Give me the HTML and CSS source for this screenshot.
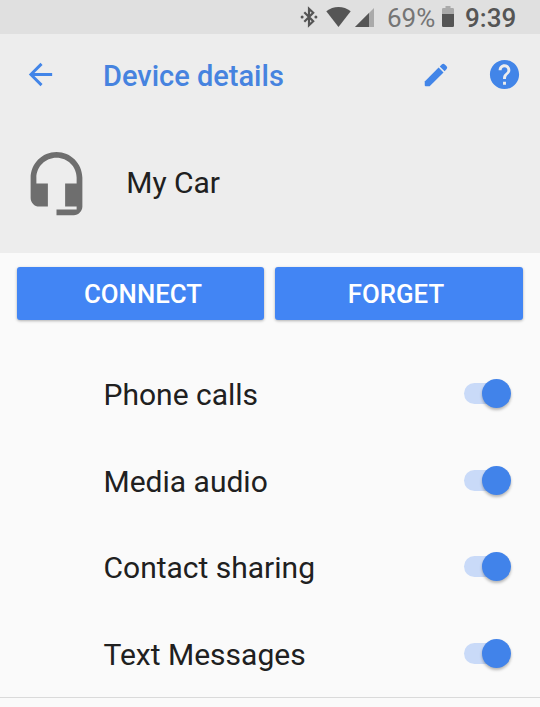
FILE: index.html
```html
<!DOCTYPE html>
<html lang="en">
<head>
<meta charset="utf-8">
<title>Device details</title>
<link rel="stylesheet" href="styles.css">
</head>
<body>
<div class="status">
  <svg class="bluetooth" width="18" height="22" viewBox="0 0 18 22"><path d="M4.3 6.2 13.2 15.2 9 19.2V2.8L13.2 6.8 4.3 15.8" fill="none" stroke="#555" stroke-width="2.2"/><circle cx="2.1" cy="11" r="1.5" fill="#555"/><circle cx="15.9" cy="11" r="1.5" fill="#555"/></svg>
  <svg class="wifi" width="25" height="20" viewBox="0 0 26 20" preserveAspectRatio="none"><path d="M.3 4.3C7.5-1.4 18.5-1.4 25.7 4.3L13 20Z" fill="#555"/></svg>
  <svg class="signal" width="19" height="19" viewBox="0 0 19 19"><path d="M0 19 19 0V19Z" fill="#aaa"/><path d="M0 19 14 5V19Z" fill="#555"/></svg>
  <span class="percent">69%</span>
  <svg class="battery" width="12" height="21" viewBox="0 0 12 21"><path d="M0 8V3.3Q0 2 1.3 2H3.5V0H8.5V2H10.7Q12 2 12 3.3V8Z" fill="#aaa"/><path d="M0 8H12V19.7Q12 21 10.7 21H1.3Q0 21 0 19.7Z" fill="#555"/></svg>
  <span class="time">9:39</span>
</div>
<header class="toolbar">
  <svg class="back" width="35" height="35" viewBox="0 0 24 24"><path d="M20 11H7.83l5.59-5.59L12 4l-8 8 8 8 1.41-1.41L7.83 13H20z"/></svg>
  <h1>Device details</h1>
  <svg class="edit" width="30" height="30" viewBox="0 0 24 24"><path d="M3 17.1V20.2Q3 21 3.8 21H6.9L18 9.9 14.1 6Z"/><path d="M15 5.1 16.8 3.4Q17.9 2.5 19 3.5L20.5 5Q21.5 6.1 20.5 7.2L18.9 9Z"/></svg>
  <svg class="help" width="35" height="35" viewBox="0 0 24 24"><path d="M12 2C6.48 2 2 6.48 2 12s4.48 10 10 10 10-4.48 10-10S17.52 2 12 2zm1 17h-2v-2h2v2zm2.07-7.75-.9.92C13.45 12.9 13 13.5 13 15h-2v-.5c0-1.1.45-2.1 1.17-2.83l1.24-1.26c.37-.36.59-.86.59-1.41 0-1.1-.9-2-2-2s-2 .9-2 2H8c0-2.21 1.79-4 4-4s4 1.79 4 4c0 .88-.36 1.68-.93 2.25z"/></svg>
</header>
<section class="device">
  <svg width="69" height="69" viewBox="0 0 24 24"><path fill="#6e6e6e" d="M12 1c-4.97 0-9 4.03-9 9v7c0 1.66 1.34 3 3 3h3v-8H5v-2c0-3.87 3.13-7 7-7s7 3.13 7 7v2h-4v8h4v1h-7v2h6c1.66 0 3-1.34 3-3V10c0-4.97-4.03-9-9-9z"/></svg>
  <span class="name">My Car</span>
</section>
<main>
  <div class="actions">
    <button class="connect">CONNECT</button>
    <button class="forget">FORGET</button>
  </div>
  <div class="options">
    <div class="row"><span>Phone calls</span><i class="switch"></i></div>
    <div class="row"><span>Media audio</span><i class="switch"></i></div>
    <div class="row"><span>Contact sharing</span><i class="switch"></i></div>
    <div class="row"><span>Text Messages</span><i class="switch"></i></div>
  </div>
</main>
</body>
</html>
```
FILE: styles.css
```css
* { box-sizing: border-box; }
body {
  margin: 0;
  height: 707px;
  overflow: hidden;
  background: #fafafa;
  color: #202020;
  font-family: Roboto, sans-serif;
}
svg { display: block; flex: none; }
.status {
  display: flex;
  height: 34px;
  background: #e0e0e0;
  font-size: 26px;
  line-height: 37px;
  white-space: nowrap;
}
.bluetooth { margin: 6px 0 0 300px; }
.wifi { margin: 7px 0 0 8px; }
.signal { margin: 8px 0 0 4px; }
.percent { width: 55px; margin-left: 13px; color: #757575; }
.battery { margin-top: 6px; }
.time { margin-left: 11px; color: #555; font-weight: 500; }
.toolbar {
  display: flex;
  align-items: center;
  height: 81px;
  padding-left: 22.5px;
  background: #ededed;
  fill: #4285e8;
}
.toolbar h1 {
  width: 318px;
  margin: 3px 0 0 45.5px;
  color: #4683df;
  font-size: 29px;
  line-height: 34px;
  font-weight: 500;
}
.help { margin-left: 36px; }
.device {
  display: flex;
  height: 138px;
  padding: 34px 0 0 22.4px;
  background: #ededed;
}
.name {
  margin: 17px 0 0 34.8px;
  font-size: 30px;
  line-height: 34px;
}
.actions {
  display: grid;
  grid-template-columns: 247px 248px;
  gap: 11px;
  padding: 14px 17px 0;
}
.actions button {
  height: 53px;
  border: 0;
  border-radius: 3px;
  background: #4285f4;
  box-shadow: 0 1px 3px rgba(0, 0, 0, .3);
  color: #fff;
  font: 500 25.8px/30px Roboto, sans-serif;
}
.actions .connect { padding: 0 0 0 5px; }
.actions .forget { padding: 0 6px 0 0; }
.options {
  height: 378px;
  padding-top: 31px;
  border-bottom: 1px solid #dadada;
}
.row {
  display: flex;
  align-items: center;
  justify-content: space-between;
  height: 86.5px;
  padding: 0 29px 0 103.5px;
  font-size: 30px;
}
.row span { padding-top: 1px; }
.switch {
  display: flex;
  align-items: center;
  justify-content: flex-end;
  width: 47px;
  height: 21px;
  margin-top: -1px;
  border-radius: 11px;
  background: #c9daf8;
}
.switch::after {
  content: "";
  width: 29px;
  height: 29px;
  flex: none;
  border-radius: 50%;
  background: #4183ea;
  box-shadow: 0 2px 3px rgba(0, 0, 0, .28);
}
```
